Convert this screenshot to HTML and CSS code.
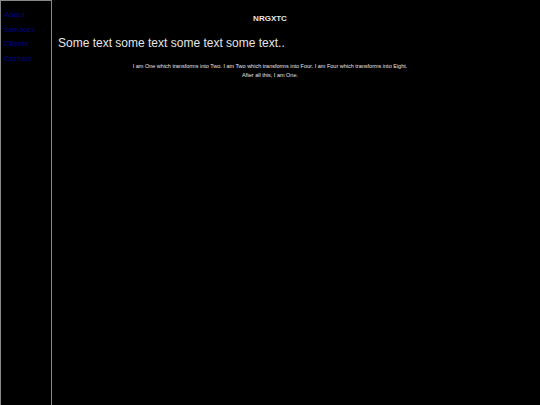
FILE: index.html
```html
<!DOCTYPE html>
<html>
<head>
<meta charset="utf-8">
<link rel="stylesheet" href="styles.css">
</head>
<body>
<div class="page">
  <nav class="sidebar">
    <a href="#">About</a>
    <a href="#">Services</a>
    <a href="#">Clients</a>
    <a href="#">Contact</a>
  </nav>
  <main class="content">
    <div class="brand">NRGXTC</div>
    <h1 class="headline">Some text some text some text some text..</h1>
    <p class="intro">I am One which transforms into Two. I am Two which transforms into Four. I am Four which transforms into Eight.<br>After all this, I am One.</p>
  </main>
</div>
</body>
</html>
```
FILE: styles.css
```css
html, body {
  margin: 0;
  padding: 0;
  background: #000;
  height: 100%;
}
body {
  font-family: "Liberation Sans", Arial, sans-serif;
  color: #e6e6e6;
}
.page {
  display: flex;
  min-height: 405px;
}
.sidebar {
  width: 50px;
  border: 1px solid #888;
  border-bottom: none;
  display: flex;
  flex-direction: column;
  padding-top: 10px;
  gap: 6px;
  box-sizing: content-box;
}
.sidebar a {
  color: #00008b;
  font-size: 8px;
  line-height: 8.5px;
  padding-left: 3px;
  text-decoration: none;
}
.content {
  flex: 1;
  padding: 0 6px;
}
.brand {
  font-size: 8px;
  font-weight: bold;
  text-align: center;
  margin-top: 14px;
  margin-left: -52px;
}
.headline {
  font-size: 12px;
  font-weight: normal;
  margin: 13px 0 0 0;
}
.intro {
  font-size: 5.5px;
  line-height: 9px;
  text-align: center;
  margin: 12px 0 0 -52px;
}
```
